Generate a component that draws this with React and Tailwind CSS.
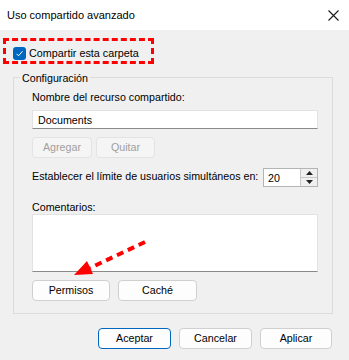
export default function App() {
  return (
    <div className="relative w-[349px] h-[360px] overflow-hidden bg-[#f0f0f0] font-['Liberation_Sans',sans-serif] text-[10.7px] text-black whitespace-nowrap">

      <div className="h-[30px] bg-white flex items-center justify-between pl-[7px] pr-[10px]">
        <span className="leading-[16px] text-[11px]">Uso compartido avanzado</span>
        <svg width="11" height="11" viewBox="0 0 11 11">
          <path d="M0.5 0.5 L10.5 10.5 M10.5 0.5 L0.5 10.5" stroke="#1a1a1a" strokeWidth="1.1" />
        </svg>
      </div>

      <div className="mt-[8px] ml-[3px] w-[151px] h-[26px] border-[3px] border-dashed border-[#ff0000] flex items-center pl-[7px] gap-[3px]">
        <span className="w-[13px] h-[13px] mt-[4px] rounded-[3px] bg-[#0067c0] flex items-center justify-center">
          <svg width="9" height="9" viewBox="0 0 9 9">
            <path d="M1.5 4.8 L3.5 6.8 L7.5 2.3" fill="none" stroke="white" strokeWidth="1" />
          </svg>
        </span>
        <span className="leading-[16px] mt-[3px] text-[10.8px]">Compartir esta carpeta</span>
      </div>

      <div className="relative mt-[13px] ml-[13px] w-[320px] h-[237px] border border-[#dcdcdc] pl-[18px] pr-[14px] pt-[11px]">
        <span className="absolute -top-[8px] left-[6px] px-[2px] bg-[#f0f0f0] leading-[16px]">Configuración</span>

        <div className="leading-[16px]">Nombre del recurso compartido:</div>
        <div className="mt-[5px] h-[19px] bg-white border border-[#e2e2e2] border-b-[#8a8a8a] flex items-center pl-[5px] leading-[16px]">Documents</div>

        <div className="mt-[8px] flex gap-[4px]">
          <div className="w-[60px] h-[21px] rounded-[4px] border border-[#e3e3e3] bg-[#f5f5f5] text-[#a0a0a0] flex items-center justify-center">Agregar</div>
          <div className="w-[59px] h-[21px] rounded-[4px] border border-[#e3e3e3] bg-[#f5f5f5] text-[#a0a0a0] flex items-center justify-center">Quitar</div>
        </div>

        <div className="mt-[10px] flex items-center justify-between">
          <span className="leading-[16px] -mt-[4px]">Establecer el límite de usuarios simultáneos en:</span>
          <div className="w-[55px] h-[19px] shrink-0 flex border border-[#b4b4b4] bg-white">
            <div className="flex-1 flex items-center pl-[4px] leading-[16px]">20</div>
            <div className="w-[17px] flex flex-col border-l border-[#c8c8c8] bg-[#f0f0f0]">
              <div className="flex-1 flex items-center justify-center border-b border-[#c8c8c8]">
                <svg width="7" height="4" viewBox="0 0 7 4"><path d="M0 4 L3.5 0 L7 4 Z" fill="#222" /></svg>
              </div>
              <div className="flex-1 flex items-center justify-center">
                <svg width="7" height="4" viewBox="0 0 7 4"><path d="M0 0 L3.5 4 L7 0 Z" fill="#222" /></svg>
              </div>
            </div>
          </div>
        </div>

        <div className="mt-[13px] leading-[14px] h-[14px]">Comentarios:</div>
        <div className="h-[58px] bg-white border border-[#e2e2e2] border-b-[#8a8a8a]"></div>

        <div className="mt-[8px] flex gap-[8px]">
          <div className="w-[78px] h-[21px] rounded-[4px] border border-[#d0d0d0] bg-[#fdfdfd] flex items-center justify-center">Permisos</div>
          <div className="w-[79px] h-[21px] rounded-[4px] border border-[#d0d0d0] bg-[#fdfdfd] flex items-center justify-center">Caché</div>
        </div>
      </div>

      <div className="mt-[14px] pr-[17px] flex justify-end gap-[8px]">
        <div className="w-[73px] h-[21px] rounded-[4px] border border-[#0067c0] bg-[#fdfdfd] flex items-center justify-center">Aceptar</div>
        <div className="w-[73px] h-[21px] rounded-[4px] border border-[#d0d0d0] bg-[#fdfdfd] flex items-center justify-center">Cancelar</div>
        <div className="w-[72px] h-[21px] rounded-[4px] border border-[#d0d0d0] bg-[#fdfdfd] flex items-center justify-center">Aplicar</div>
      </div>

      <svg className="absolute left-0 top-0 pointer-events-none" width="349" height="360" viewBox="0 0 349 360">
        <path d="M145 242 L90 268" stroke="#ff0000" strokeWidth="4" strokeDasharray="7 5" strokeLinecap="butt" />
        <path d="M74 275 L87 261 L93 274 Z" fill="#ff0000" />
      </svg>
    </div>
  )
}
